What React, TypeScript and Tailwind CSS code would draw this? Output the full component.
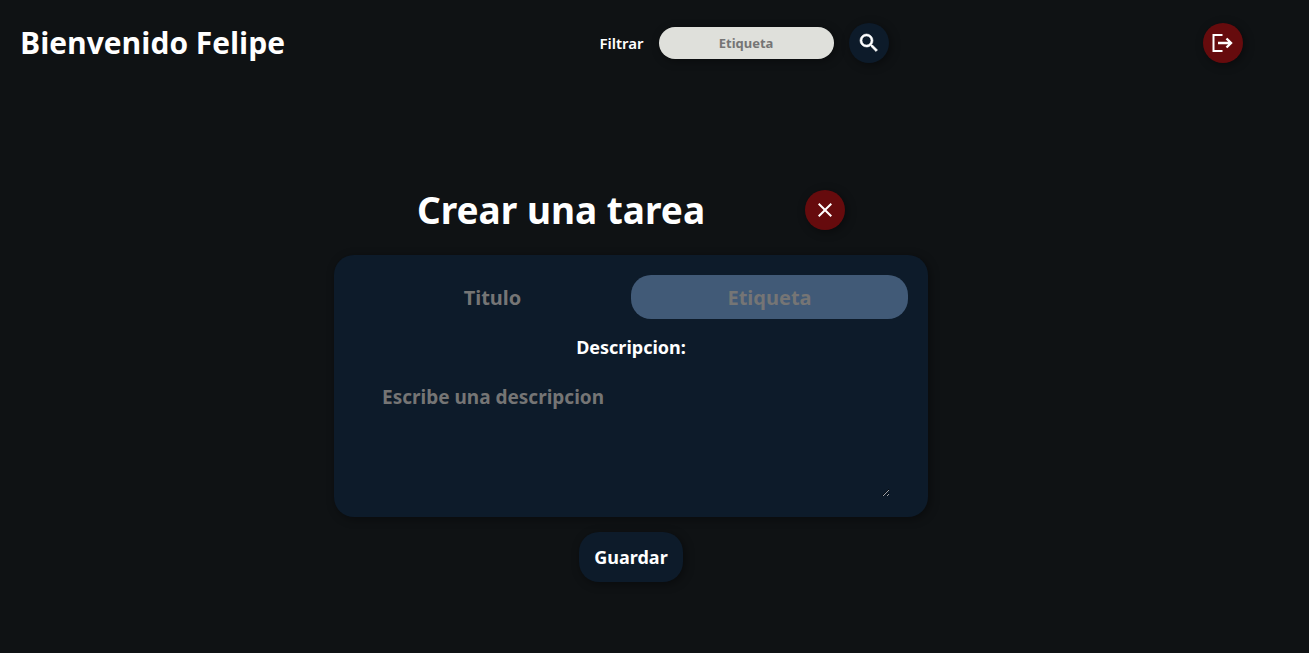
import { MdClose } from "react-icons/md";

function SearchIcon() {
  return (
    <svg width="24" height="24" viewBox="0 0 24 24" fill="currentColor" stroke="currentColor" strokeWidth="0.6" aria-hidden="true">
      <path d="M15.500 14h-.790l-.280-.270A6.471 6.471 0 0 0 16 9.500 6.500 6.500 0 1 0 9.500 16c1.610 0 3.090-.590 4.230-1.570l.270.280v.790l5 4.990L20.490 19l-4.990-5zm-6 0C7.010 14 5 11.990 5 9.500S7.010 5 9.500 5 14 7.010 14 9.500 11.990 14 9.500 14z" />
    </svg>
  );
}

function LogoutIcon() {
  return (
    <svg width="24" height="24" viewBox="0 0 24 24" fill="none" stroke="currentColor" aria-hidden="true">
      <path d="M11.500 4H2.500v16h9" strokeWidth="2" />
      <path d="M7 12h13.500M15.500 7.500l4.500 4.500-4.500 4.500" strokeWidth="2.400" />
    </svg>
  );
}

const roundButton =
  "flex size-10 items-center justify-center rounded-full text-white shadow-[2px_2px_10px_rgba(0,0,0,0.4)]";

function Header() {
  return (
    <header className="flex h-[86px] items-center justify-between pr-[66px] pl-5">
      <h1 className="font-['Open_Sans',sans-serif] text-3xl font-bold">Bienvenido Felipe</h1>
      <form className="flex items-center gap-[15px]" onSubmit={(e) => e.preventDefault()}>
        <label htmlFor="filter" className="text-[15px] font-semibold">
          Filtrar
        </label>
        <input
          id="filter"
          type="text"
          placeholder="Etiqueta"
          className="h-8 w-[175px] rounded-2xl bg-[#dfe0db] px-4 text-center text-[13px] font-bold text-black shadow-[2px_2px_10px_rgba(0,0,0,0.4)] placeholder:text-[#757575]"
        />
        <button type="submit" aria-label="Buscar" className={`${roundButton} bg-[#0d1b2a]`}>
          <SearchIcon />
        </button>
      </form>
      <button type="button" aria-label="Salir" className={`${roundButton} bg-[#660b0d]`}>
        <LogoutIcon />
      </button>
    </header>
  );
}

function TaskForm() {
  return (
    <form className="flex w-full max-w-[594px] flex-col items-center" onSubmit={(e) => e.preventDefault()}>
      <div className="flex h-10 items-center gap-[100px]">
        <h2 className="text-[37px] font-bold">Crear una tarea</h2>
        <button type="button" aria-label="Cerrar" className={`${roundButton} bg-[#660b0d]`}>
          <MdClose size={24} />
        </button>
      </div>
      <div className="mt-[25px] flex w-full flex-col items-center rounded-[20px] bg-[#0d1b2a] p-5 shadow-[2px_2px_10px_rgba(0,0,0,0.4)]">
        <div className="grid w-full grid-cols-2">
          <input
            type="text"
            aria-label="Titulo"
            placeholder="Titulo"
            className="h-11 min-w-0 rounded-[20px] bg-transparent px-4 text-center text-xl font-bold placeholder:text-[#757575]"
          />
          <input
            type="text"
            aria-label="Etiqueta"
            placeholder="Etiqueta"
            className="h-11 min-w-0 rounded-[20px] bg-[#415a77] px-4 text-center text-xl font-bold placeholder:text-[#757575]"
          />
        </div>
        <label htmlFor="description" className="mt-4 text-lg/6 font-bold">
          Descripcion:
        </label>
        <textarea
          id="description"
          placeholder="Escribe una descripcion"
          className="mt-4 h-[122px] w-[518px] max-w-full resize bg-transparent p-[10px] text-[19px]/6 font-bold placeholder:text-[#757575]"
        />
      </div>
      <button
        type="submit"
        className="mt-[15px] h-[50px] rounded-[20px] bg-[#0d1b2a] px-[15px] text-lg font-bold shadow-[2px_2px_10px_rgba(0,0,0,0.4)]"
      >
        Guardar
      </button>
    </form>
  );
}

export default function App() {
  return (
    <div className="flex min-h-screen flex-col bg-[#0f1214] font-['Noto_Sans',sans-serif] text-white">
      <Header />
      <main className="flex justify-center pt-[104px] pr-[47px] pb-10">
        <TaskForm />
      </main>
    </div>
  );
}
